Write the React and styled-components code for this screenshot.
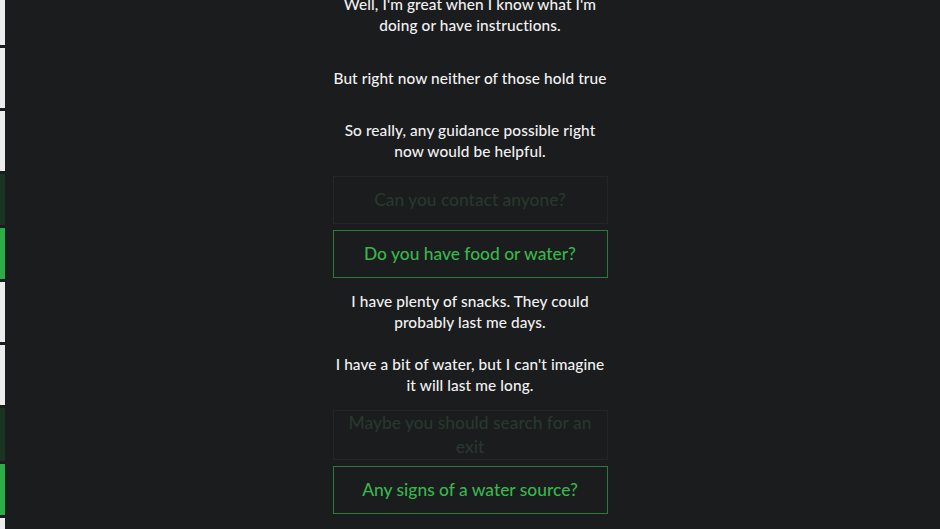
import React from 'react';
import styled, { createGlobalStyle } from 'styled-components';

const GlobalStyle = createGlobalStyle`
  html, body {
    margin: 0;
    padding: 0;
    background: #1b1c1e;
  }
  body {
    font-family: 'Lato', 'Noto Sans', sans-serif;
  }
`;

const Screen = styled.div`
  width: 100%;
  height: 529px;
  overflow: hidden;
  background: #1b1c1e;
`;

const Log = styled.div`
  display: flex;
  flex-direction: column;
  gap: 3px;
  margin-top: -15px;
`;

const barColors = {
  text: '#ececec',
  faded: '#1d3322',
  chosen: '#2bae47',
};

const Row = styled.div`
  display: flex;
  align-items: stretch;
  min-height: ${(p) => (p.$kind === 'text' ? '60px' : '51px')};
`;

const Bar = styled.div`
  flex: 0 0 5px;
  background: ${(p) => barColors[p.$kind]};
`;

const Body = styled.div`
  flex: 1;
  display: flex;
  align-items: center;
  justify-content: center;
  padding: ${(p) => (p.$kind === 'text' ? '8px 5px 8px 0' : '2px 5px 1px 0')};
`;

const Line = styled.p`
  margin: 0;
  width: 280px;
  text-align: center;
  color: #f1f1f1;
  font-size: 15.4px;
  line-height: 21px;
  font-weight: 500;
  letter-spacing: 0.1px;
`;

const Choice = styled.div`
  box-sizing: border-box;
  width: 275px;
  min-height: 48px;
  padding: 0 12px;
  display: flex;
  align-items: center;
  justify-content: center;
  text-align: center;
  font-size: 17.4px;
  line-height: 24px;
  font-weight: 500;
  border: 1.5px solid ${(p) => (p.$chosen ? '#2a7a38' : '#222925')};
  color: ${(p) => (p.$chosen ? '#38b64c' : '#28382c')};
`;

const entries = [
  { kind: 'text', text: "Well, I'm great when I know what I'm doing or have instructions." },
  { kind: 'text', text: 'But right now neither of those hold true' },
  { kind: 'text', text: 'So really, any guidance possible right now would be helpful.' },
  { kind: 'faded', text: 'Can you contact anyone?' },
  { kind: 'chosen', text: 'Do you have food or water?' },
  { kind: 'text', text: 'I have plenty of snacks. They could probably last me days.' },
  { kind: 'text', text: "I have a bit of water, but I can't imagine it will last me long." },
  { kind: 'faded', text: 'Maybe you should search for an exit' },
  { kind: 'chosen', text: 'Any signs of a water source?' },
  { kind: 'text', text: '' },
];

const App = () => (
  <>
    <GlobalStyle />
    <Screen>
      <Log>
        {entries.map((e, i) => (
          <Row key={i} $kind={e.kind}>
            <Bar $kind={e.kind} />
            <Body $kind={e.kind}>
              {e.kind === 'text' ? (
                <Line>{e.text}</Line>
              ) : (
                <Choice $chosen={e.kind === 'chosen'}>{e.text}</Choice>
              )}
            </Body>
          </Row>
        ))}
      </Log>
    </Screen>
  </>
);

export default App;
